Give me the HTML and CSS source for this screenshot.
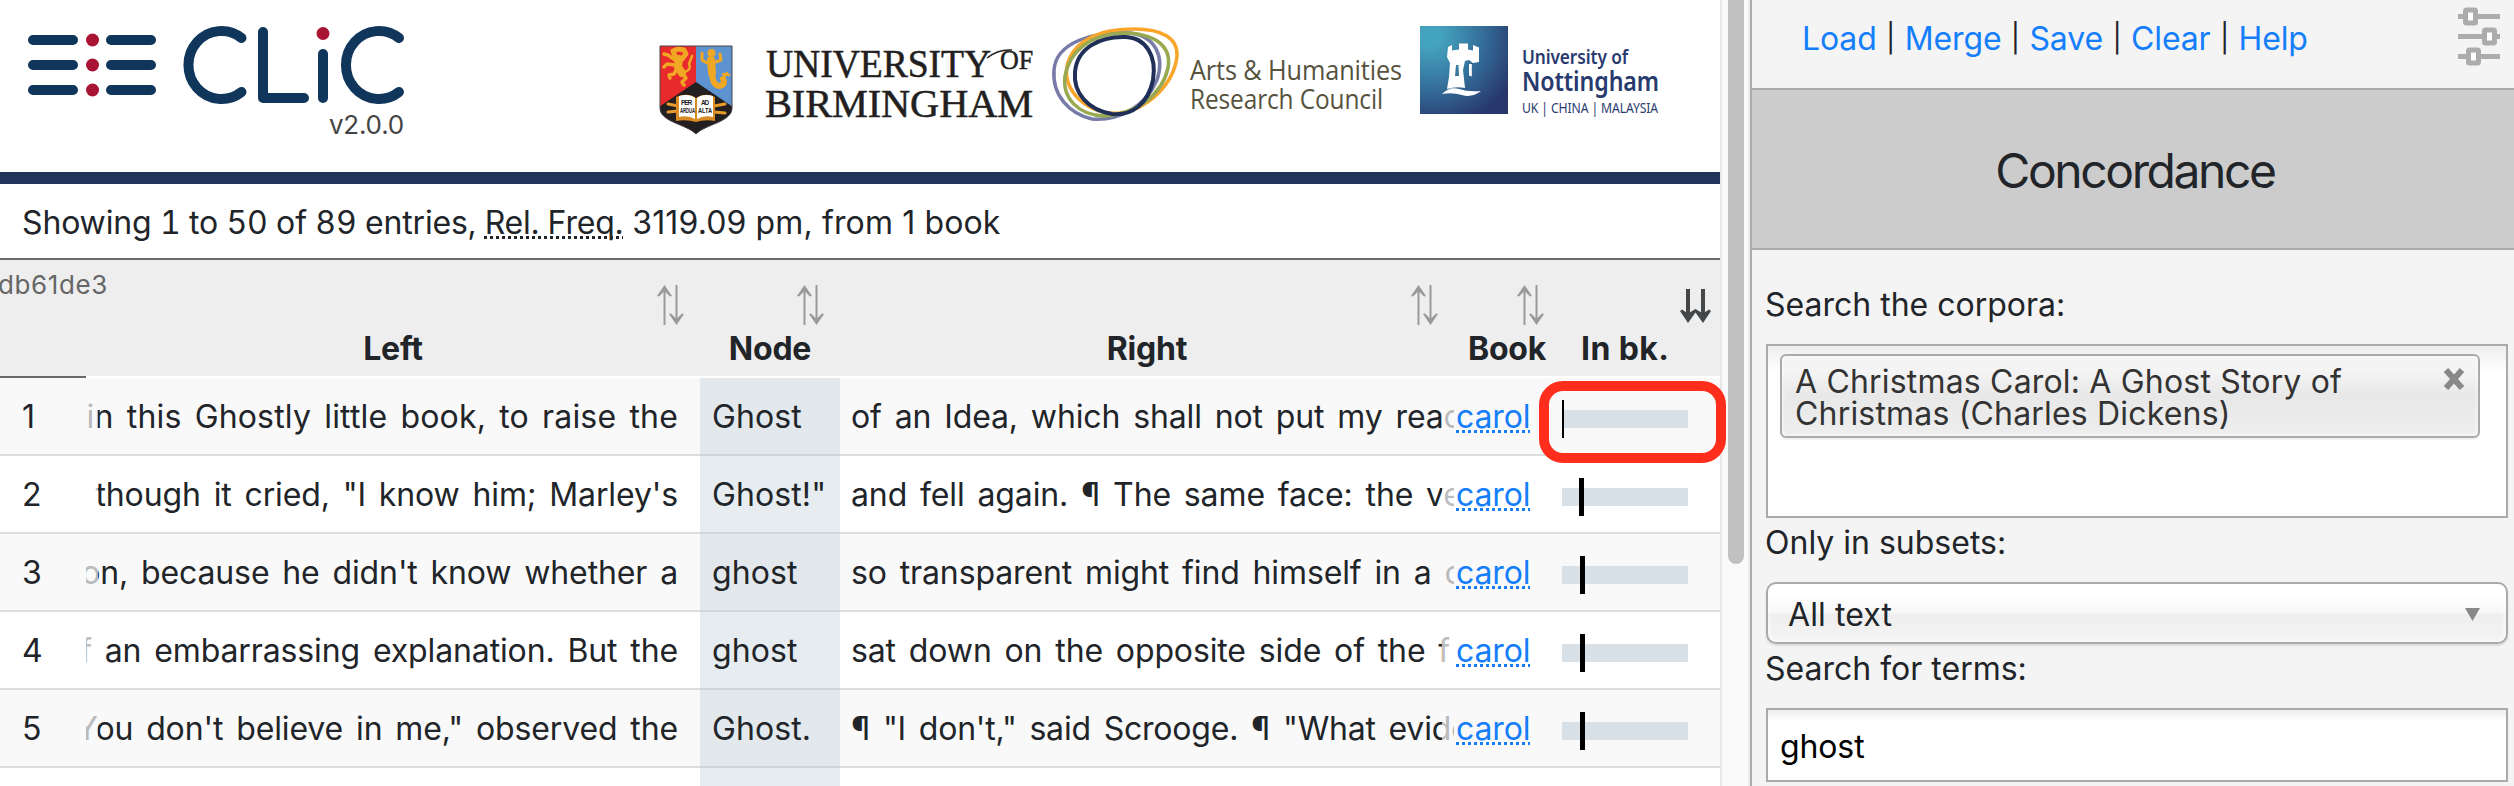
FILE: index.html
```html
<!DOCTYPE html>
<html lang="en">
<head>
<meta charset="utf-8">
<title>CLiC - Concordance</title>
<link rel="stylesheet" href="styles.css">
</head>
<body>
<svg class="defs" width="0" height="0">
  <symbol id="sort-both" viewBox="0 0 27 40">
    <path d="M7.500 40V3M19.500 0v37" fill="none" stroke="currentColor" stroke-width="2"/>
    <path d="M7.500 0L15 11l-2 .6L7.500 6 2 11.600 0 11zM19.500 40L12 29l2-.6 5.500 5.600 5.500-5.600 2 .6z" fill="currentColor"/>
  </symbol>
  <symbol id="sort-down" viewBox="0 0 31 34">
    <path d="M8 0v28M23 0v28" fill="none" stroke="currentColor" stroke-width="4"/>
    <path d="M8 34L0 22l2-1.500 6 4 7.500-4.500 7.500 4.500 6-4 2 1.500-8 12-7.500-10.500z" fill="currentColor"/>
  </symbol>
</svg>
<div class="app">
  <main class="content">
    <header class="banner">
      <div class="brand">
        <svg width="410" height="110" viewBox="0 0 410 110">
          <g stroke="#11365c" stroke-width="10" stroke-linecap="round" stroke-linejoin="round" fill="none">
            <path d="M33 40H73M33 65H73M33 90H73M111 40H151M111 65H151M111 90H151"/>
            <path d="M241.500 38A33 34 0 1 0 241.500 92"/>
            <path d="M263 32V98H304"/>
            <path d="M323 54V98"/>
            <path d="M399 38A33 34 0 1 0 399 92"/>
          </g>
          <g fill="#a91434"><circle cx="92.500" cy="40" r="6.500"/><circle cx="92.500" cy="65" r="6.500"/><circle cx="92.500" cy="90" r="6.500"/><circle cx="323" cy="33.500" r="6.500"/></g>
        </svg>
        <div class="version">v2.0.0</div>
      </div>
      <svg class="partners" width="1020" height="120" viewBox="650 20 1020 120">
        <defs>
          <radialGradient id="nott" cx=".12" cy=".12" r="1.150"><stop offset=".1" stop-color="#44a3bf"/><stop offset=".5" stop-color="#35709b"/><stop offset=".92" stop-color="#27366b"/></radialGradient>
          <clipPath id="shield"><path d="M660 46H732V108C732 122 706 124 696 134C686 124 660 122 660 108Z"/></clipPath>
        </defs>
        <g clip-path="url(#shield)">
          <rect x="660" y="46" width="36" height="90" fill="#e92a2c"/>
          <rect x="696" y="46" width="36" height="90" fill="#5e93d2"/>
          <path d="M656 109L696 82L736 109V136H656Z" fill="#231f20"/>
          <g fill="none" stroke="#f0a824" stroke-linecap="round" stroke-linejoin="round">
            <path d="M673 51l5-2 6 1 2 4-4 5-6-1z" stroke-width="5"/>
            <path d="M679 59l-1 8 4 6" stroke-width="8"/>
            <path d="M675 60l-7-5-4-1M675 65l-8-1-3 3M676 70l-2 4-5 1 1 3M683 74l3 4-4 4 2 3" stroke-width="3.500"/>
            <path d="M685 72q7-3 4-8l3-8" stroke-width="2.500"/>
            <circle cx="711.500" cy="53" r="2" stroke-width="4"/>
            <path d="M711 60l1 13" stroke-width="8"/>
            <path d="M707 63l-5-3 0-7M716 62l5-2-1-6" stroke-width="3"/>
            <path d="M712 74q1 12 8 12 6-2 3-7" stroke-width="6"/>
            <path d="M722 79l5-6M723 74l6 1" stroke-width="2.500"/>
          </g>
          <g stroke="#e79b2c" stroke-width="3" stroke-linecap="round"><path d="M668 104l10 2M668 112l10-1M714 106l11-2M714 112l11 1"/></g>
          <path d="M676 97q12-5 20 1 9-6 19-1V121q-10-2-19 1-10-3-20-1z" fill="#d98a23"/>
          <path d="M679 96q10-3 16 2V119q-7-4-16-2zM713 96q-10-3-16 2V119q7-4 16-2z" fill="#fff"/>
          <g font-family="Liberation Sans" font-size="6.500" font-weight="700" fill="#231f20">
            <text x="681" y="105" textLength="11">PER</text><text x="701" y="105" textLength="8">AD</text>
            <text x="680" y="113" textLength="15" lengthAdjust="spacingAndGlyphs">ARDUA</text><text x="698" y="113" textLength="14" lengthAdjust="spacingAndGlyphs">ALTA</text>
          </g>
        </g>
        <path d="M660 46H732V108C732 122 706 124 696 134C686 124 660 122 660 108Z" fill="none" stroke="#4a4348"/>
        <g font-family="Liberation Serif" fill="#231f20" stroke="#231f20" stroke-width=".5">
          <text x="766" y="77" font-size="40" textLength="225" lengthAdjust="spacingAndGlyphs">UNIVERSITY</text>
          <text x="1000" y="69" font-size="28" textLength="33" lengthAdjust="spacingAndGlyphs">OF</text>
          <path d="M987 58Q998 49 1012 50" fill="none" stroke-width="1.500"/>
          <text x="765" y="116.500" font-size="40" textLength="268" lengthAdjust="spacingAndGlyphs">BIRMINGHAM</text>
        </g>
        <g fill="none" stroke-width="3.500">
          <path d="M1054 70C1056 42 1094 31 1130 33C1155 36 1165 56 1157 80C1145 108 1118 121 1092 119C1070 114 1052 96 1054 70Z" stroke="#777ba8"/>
          <path d="M1067 66C1072 44 1094 29 1134 29C1162 29 1178 38 1177 56C1174 84 1148 109 1120 113C1090 116 1062 92 1067 66Z" stroke="#f9a62b"/>
          <path d="M1065 76C1070 50 1092 34 1122 33C1155 33 1172 46 1168 68C1162 94 1138 114 1104 116C1078 115 1062 98 1065 76Z" stroke="#98a951"/>
          <path d="M1075 72C1077 48 1100 36 1126 37C1146 38 1157 56 1153 80C1148 104 1132 116 1112 114C1088 110 1073 93 1075 72Z" stroke="#1f2f58" stroke-width="4"/>
        </g>
        <g font-family="Open Sans" font-size="28" fill="#56523e">
          <text x="1190" y="79.500" textLength="212" lengthAdjust="spacingAndGlyphs">Arts &amp; Humanities</text>
          <text x="1190" y="108.500" textLength="193" lengthAdjust="spacingAndGlyphs">Research Council</text>
        </g>
        <rect x="1420" y="26" width="88" height="88" fill="url(#nott)"/>
        <path fill-rule="evenodd" d="M1448 47l4-2v5.500l7-1V43.500h9v6l5 1V45l6 2.500V62l-6 1-4-3-4 1-2 9 2 18q-9-2-18 1l2-12 1-14-3-6zM1456 65l-1 11h4l-.5-11z" fill="#fff"/>
        <path d="M1469 64h2.800v12.500l-2.800-1z" fill="#fff"/>
        <path d="M1442 94q8-8 17-5t22 2q-9 7-19 4t-20-1z" fill="#fff"/>
        <g font-family="Noto Sans" fill="#283a6e">
          <text x="1522" y="64" font-size="19.500" font-weight="600" textLength="106" lengthAdjust="spacingAndGlyphs">University of</text>
          <text x="1522" y="90.500" font-size="27.500" font-weight="600" textLength="137" lengthAdjust="spacingAndGlyphs">Nottingham</text>
          <text x="1522" y="113" font-size="13.500" textLength="136" lengthAdjust="spacingAndGlyphs">UK | CHINA | MALAYSIA</text>
        </g>
      </svg>
    </header>
    <div class="summary">Showing 1 to 50 of 89 entries, <span class="abbr">Rel. Freq.</span><span class="freq"> 3119.09 pm, from 1 book</span></div>
    <section class="table">
      <div class="row head">
        <div class="cell corner">db61de3</div>
        <div class="cell"><svg class="sort"><use href="#sort-both"/></svg><b>Left</b></div>
        <div class="cell"><svg class="sort"><use href="#sort-both"/></svg><b>Node</b></div>
        <div class="cell"><svg class="sort"><use href="#sort-both"/></svg><b>Right</b></div>
        <div class="cell bookhead"><svg class="sort"><use href="#sort-both"/></svg><b>Book</b></div>
        <div class="cell last"><svg class="sort active"><use href="#sort-down"/></svg><b>In bk.</b></div>
      </div>
      <div class="row odd"><div class="num">1</div><div class="left wide"><span>in this Ghostly little book, to raise the</span></div><div class="node">Ghost</div><div class="right"><span>of an Idea, which shall not put my reac</span></div><div class="book"><a>carol</a></div><div class="place"><div class="bar"><i class="thin"></i></div><div class="highlight"></div></div></div>
      <div class="row"><div class="num">2</div><div class="left"><span>though it cried, "I know him; Marley's</span></div><div class="node">Ghost!"</div><div class="right"><span>and fell again. ¶ The same face: the ve</span></div><div class="book"><a>carol</a></div><div class="place"><div class="bar"><i style="margin-left:17px"></i></div></div></div>
      <div class="row odd"><div class="num">3</div><div class="left"><span>on, because he didn't know whether a</span></div><div class="node">ghost</div><div class="right"><span>so transparent might find himself in a c</span></div><div class="book"><a>carol</a></div><div class="place"><div class="bar"><i style="margin-left:18px"></i></div></div></div>
      <div class="row"><div class="num">4</div><div class="left"><span>f an embarrassing explanation. But the</span></div><div class="node">ghost</div><div class="right"><span>sat down on the opposite side of the f</span></div><div class="book"><a>carol</a></div><div class="place"><div class="bar"><i style="margin-left:18px"></i></div></div></div>
      <div class="row odd"><div class="num">5</div><div class="left"><span>You don't believe in me," observed the</span></div><div class="node">Ghost.</div><div class="right narrow"><span>¶ "I don't," said Scrooge. ¶ "What evide</span></div><div class="book"><a>carol</a></div><div class="place"><div class="bar"><i style="margin-left:18px"></i></div></div></div>
      <div class="row"><div class="num"></div><div class="left"></div><div class="node"></div><div class="right"></div><div class="book"></div><div class="place"></div></div>
    </section>
  </main>
  <div class="scrollbar"><div class="thumb"></div></div>
  <aside class="sidebar">
    <nav class="menu">
      <div class="links"><a>Load</a><i>|</i><a>Merge</a><i>|</i><a>Save</a><i>|</i><a>Clear</a><i>|</i><a>Help</a></div>
      <svg class="sliders" width="42" height="60" viewBox="0 0 42 60">
        <path d="M0 9.500H42M0 29.500H42M0 49.500H42" stroke="#acacac" stroke-width="5"/>
        <g fill="#fff" stroke="#acacac" stroke-width="5"><rect x="7.500" y="3" width="10" height="13" rx="1"/><rect x="26.500" y="23" width="10" height="13" rx="1"/><rect x="10.500" y="43" width="10" height="13" rx="1"/></g>
      </svg>
    </nav>
    <h1 class="title">Concordance</h1>
    <form class="form">
      <label class="lab">Search the corpora:</label>
      <div class="chosen">
        <div class="tag"><span class="tag-text">A Christmas Carol: A Ghost Story of<br>Christmas (Charles Dickens)</span>
          <svg width="24" height="24" viewBox="0 0 24 24"><path d="M4 3L20 21M20 3L4 21" stroke="#888" stroke-width="6"/></svg>
        </div>
      </div>
      <label class="lab second">Only in subsets:</label>
      <div class="select"><span>All text</span><svg width="15" height="13" viewBox="0 0 15 13"><path d="M0 0H15L7.500 13Z" fill="#888"/></svg></div>
      <label class="lab third">Search for terms:</label>
      <div class="input"><span>ghost</span></div>
    </form>
  </aside>
</div>
</body>
</html>
```
FILE: styles.css
```css
* { box-sizing: border-box; }
body { margin: 0; background: #fff; color: #212529; font: 32px/48px Inter, "Liberation Sans", sans-serif; letter-spacing: -0.12px; }
a { color: #147efb; }
.defs { position: absolute; }
.app { display: flex; height: 786px; overflow: hidden; }

.content { position: relative; z-index: 1; width: 1720px; height: 786px; flex: none; }
.banner { display: flex; height: 184px; border-bottom: 12px solid #21345a; }
.brand { width: 650px; }
.brand svg { display: block; }
.version { width: 404px; text-align: right; font-size: 26px; line-height: 30px; color: #444; letter-spacing: -0.2px; }
.partners { margin-top: 20px; }
.summary { height: 76px; padding: 15px 22px 0; border-bottom: 2px solid #6a6a6a; white-space: pre; font-feature-settings: "tnum"; letter-spacing: -0.15px; }
.freq { font-feature-settings: normal; letter-spacing: 0.13px; }
.abbr { text-decoration: underline dotted 3px; text-underline-offset: 2px; text-decoration-skip-ink: none; }

.row { display: grid; grid-template-columns: 86px 614px 140px 614px 108px 158px; height: 78px; background: #fff; border-bottom: 2px solid #ddd; line-height: 78px; white-space: nowrap; }
.row.odd { background: #f9f9f9; }
.row > div { height: 76px; }
.row.head { height: 118px; background: #eee; border-bottom: 2px solid #fff; }
.row .cell { display: flex; flex-direction: column; height: 116px; padding: 25px 16px 0 0; line-height: 40px; }
.cell b { margin: 4px -16px 0 0; text-align: center; font-weight: 700; letter-spacing: -0.2px; }
.row .cell.corner { margin-left: -2px; padding: 5px 0 0; height: 118px; font-size: 26px; color: #666; border-bottom: 2px solid #6a6a6a; letter-spacing: 0.6px; }
.row .cell.bookhead { padding-right: 18px; }
.row .cell.last { padding-right: 9px; }
.cell.last b { margin-right: 0; text-align: left; padding-left: 19px; letter-spacing: 0.4px; }
.sort { width: 27px; height: 40px; color: #999; align-self: flex-end; flex: none; }
.sort.active { width: 31px; height: 34px; margin: 4px 0 2px; color: #43474a; }
.num { padding-left: 22px; }
.left, .right { position: relative; overflow: hidden; word-spacing: 4px; background: #fff; }
.row.odd .left, .row.odd .right { background: #f9f9f9; }
.left { display: flex; justify-content: flex-end; padding-right: 22px; }
.left span { flex: none; }
.left.wide { letter-spacing: 0.17px; }
.narrow { letter-spacing: -0.2px; }
.left::before, .right::after { content: ""; position: absolute; top: 0; bottom: 0; width: 12px; background: inherit; opacity: .7; z-index: 1; }
.left::before { left: 0; }
.right { padding-left: 11px; }
.right::after { right: 0; }
.row .node { padding-left: 12px; height: 78px; background: rgba(176, 196, 204, .32); letter-spacing: 0.1px; }
.book { padding-left: 2px; }
.book a { text-decoration: underline dotted 3px; text-underline-offset: 2px; text-decoration-skip-ink: none; }
.place { position: relative; padding-top: 32px; }
.bar { width: 126px; height: 18px; background: #d8e1e8; }
.bar i { display: block; width: 5px; height: 38px; background: #000; transform: translateY(-10px); }
.bar i.thin { width: 2px; }
.highlight { position: absolute; left: -23px; top: 3px; width: 187px; height: 82px; border: 10px solid #ff2d1c; border-radius: 24px; z-index: 2; }

.scrollbar { width: 30px; flex: none; padding: 0 6px; background: #fafafa; border-left: 2px solid #e7e7e7; border-right: 2px solid #ededed; }
.thumb { width: 16px; height: 564px; background: #c1c1c1; border-radius: 0 0 8px 8px; }

.sidebar { flex: 1; background: #f4f4f4; border-left: 2px solid #aaa; }
.menu { display: flex; justify-content: space-between; height: 90px; padding: 7px 14px 0 50px; border-bottom: 2px solid #aaa; }
.links { display: flex; padding-top: 8px; }
.links i { width: 28px; text-align: center; font-style: normal; font-size: 28px; line-height: 46px; }
.title { display: flex; align-items: center; justify-content: center; height: 160px; margin: 0; padding: 4px 0 0 4px; background: #ccc; border-bottom: 2px solid #aaa; font-size: 48px; font-weight: 400; letter-spacing: -2.4px; }
.form { display: flex; flex-direction: column; padding: 31px 6px 0 14px; }
.lab { height: 48px; margin-left: -1px; letter-spacing: 0; }
.chosen { height: 174px; margin-top: 15px; padding: 8px 12px; border: 2px solid #aaa; background: linear-gradient(#eee 0, #fff 26px); }
.tag { display: flex; justify-content: space-between; width: 700px; height: 84px; padding: 10px 12px 0 13px; border: 2px solid #aaa; border-radius: 6px; background: linear-gradient(#f4f4f4 20%, #f0f0f0 30%, #e8e8e8 50%, #eee 100%); box-shadow: 0 0 4px #fff inset, 0 2px 0 rgba(0,0,0,.05); color: #333; line-height: 32px; letter-spacing: 0.18px; }
.tag svg { margin-top: 1px; }
.second { margin-top: 1px; }
.select { display: flex; justify-content: space-between; align-items: center; height: 62px; margin-top: 15px; padding: 3px 26px 0 20px; border: 2px solid #aaa; border-radius: 10px; background: linear-gradient(#fff 20%, #f6f6f6 50%, #eee 52%, #f4f4f4 100%); box-shadow: 0 0 6px #fff inset, 0 2px 2px rgba(0,0,0,.1); letter-spacing: .1px; }
.third { padding-top: 1px; }
.input { height: 74px; margin-top: 16px; padding: 13px 12px; border: 2px solid #aaa; background: linear-gradient(#eee 0, #fff 12px); color: #000; }
```
